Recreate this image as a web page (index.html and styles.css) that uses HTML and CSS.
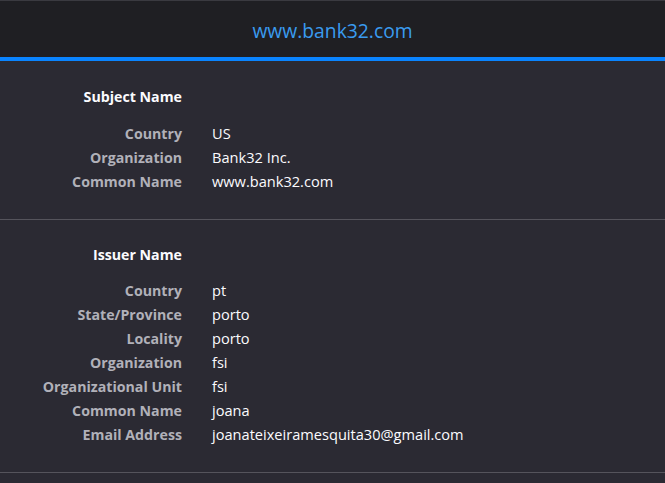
FILE: index.html
```html
<!DOCTYPE html>
<html>
<head>
<meta charset="utf-8">
<link rel="stylesheet" href="styles.css">
</head>
<body>
<header class="title-bar"><h1 class="title">www.bank32.com</h1></header>
<section class="group">
  <div class="row heading"><span class="label">Subject Name</span><span></span></div>
  <div class="rows">
    <div class="row"><span class="label">Country</span><span class="value">US</span></div>
    <div class="row"><span class="label">Organization</span><span class="value">Bank32 Inc.</span></div>
    <div class="row"><span class="label">Common Name</span><span class="value">www.bank32.com</span></div>
  </div>
</section>
<section class="group">
  <div class="row heading"><span class="label">Issuer Name</span><span></span></div>
  <div class="rows">
    <div class="row"><span class="label">Country</span><span class="value">pt</span></div>
    <div class="row"><span class="label">State/Province</span><span class="value">porto</span></div>
    <div class="row"><span class="label">Locality</span><span class="value">porto</span></div>
    <div class="row"><span class="label">Organization</span><span class="value">fsi</span></div>
    <div class="row"><span class="label">Organizational Unit</span><span class="value">fsi</span></div>
    <div class="row"><span class="label">Common Name</span><span class="value">joana</span></div>
    <div class="row"><span class="label">Email Address</span><span class="value">joanateixeiramesquita30@gmail.com</span></div>
  </div>
</section>
</body>
</html>
```
FILE: styles.css
```css
html, body {
  margin: 0;
  padding: 0;
  background: #2b2a33;
  font-family: "Open Sans", "Noto Sans", sans-serif;
  font-size: 14.6px;
  color: #fbfbfe;
}
.title-bar {
  background: #1f1f23;
  border-top: 1px solid #3a3a40;
  border-bottom: 4px solid #0a84ff;
  height: 56px;
  display: flex;
  align-items: center;
  justify-content: center;
  box-sizing: border-box;
  height: 61px;
  padding-top: 3px;
}
.title {
  margin: 0;
  font-size: 19.3px;
  font-weight: normal;
  color: #3a9bef;
  line-height: 24px;
}
.group {
  padding: 24px 0 26px;
  border-bottom: 1px solid #55545c;
}
.group + .group {
  padding-top: 23px;
}
.rows {
  margin-top: 12px;
}
.group + .group .rows {
  margin-top: 11px;
}
.row {
  display: grid;
  grid-template-columns: 182px 1fr;
  column-gap: 30px;
  line-height: 24px;
  height: 24px;
  align-items: baseline;
}
.label {
  text-align: right;
  font-weight: bold;
  font-size: 14.2px;
  color: #b1b1b9;
}
.heading .label {
  color: #fbfbfe;
}
.value {
  color: #fbfbfe;
}
```
